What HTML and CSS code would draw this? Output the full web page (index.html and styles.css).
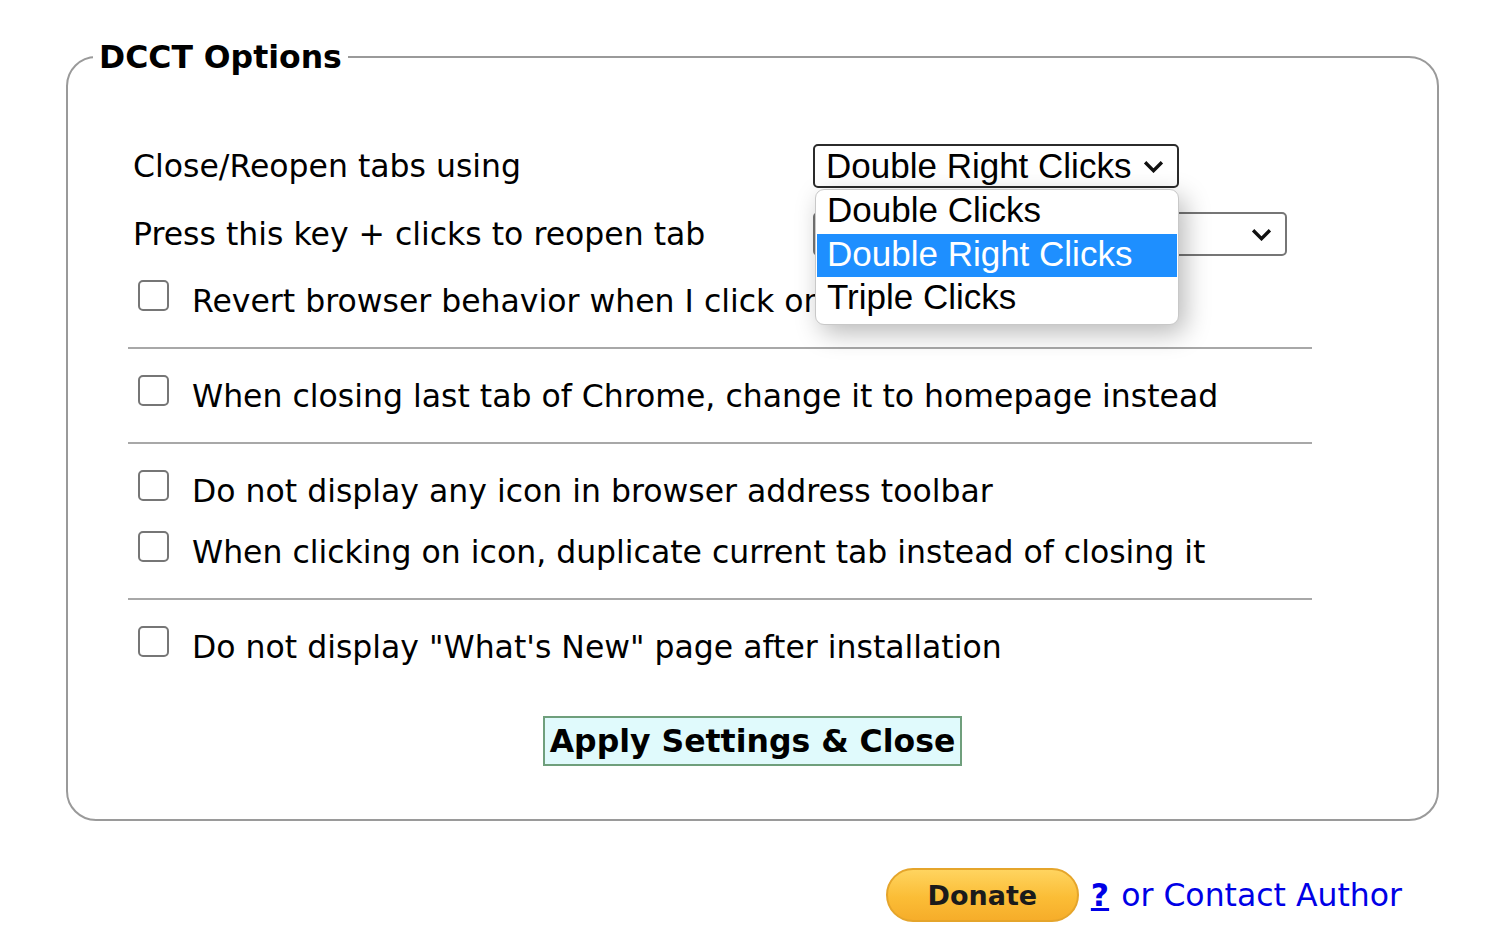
FILE: index.html
```html
<!DOCTYPE html>
<html lang="en">
<head>
  <meta charset="UTF-8">
  <title>DCCT Options</title>
  <link rel="stylesheet" href="styles.css">
</head>
<body>

<!-- Options box -->
<form class="options">
  <fieldset class="box">
    <legend>DCCT Options</legend>

    <!-- Select rows -->
    <div class="settings">
      <label class="setting-label">Close/Reopen tabs using</label>
      <div class="select-wrap">
        <div class="select select-mode is-open">
          <span>Double Right Clicks</span>
          <svg class="chevron" viewBox="0 0 20 12"><polyline points="2,2 10,10 18,2"/></svg>
        </div>
        <ul class="dropdown">
          <li>Double Clicks</li>
          <li class="active">Double Right Clicks</li>
          <li>Triple Clicks</li>
        </ul>
      </div>

      <label class="setting-label">Press this key + clicks to reopen tab</label>
      <div class="select-wrap">
        <div class="select select-key">
          <span>Ctrl</span>
          <svg class="chevron" viewBox="0 0 20 12"><polyline points="2,2 10,10 18,2"/></svg>
        </div>
      </div>
    </div>

    <label class="check-row first"><input type="checkbox"><span>Revert browser behavior when I click on a link</span></label>
    <hr>
    <label class="check-row"><input type="checkbox"><span>When closing last tab of Chrome, change it to homepage instead</span></label>
    <hr>
    <label class="check-row"><input type="checkbox"><span>Do not display any icon in browser address toolbar</span></label>
    <label class="check-row"><input type="checkbox"><span>When clicking on icon, duplicate current tab instead of closing it</span></label>
    <hr>
    <label class="check-row"><input type="checkbox"><span>Do not display "What's New" page after installation</span></label>

    <div class="actions">
      <button type="button" class="apply">Apply Settings &amp; Close</button>
    </div>
  </fieldset>
</form>

<!-- Footer -->
<div class="footer">
  <button type="button" class="donate">Donate</button>
  <a href="#" class="help">?</a>
  <a href="#" class="contact">or Contact Author</a>
</div>

</body>
</html>
```

FILE: styles.css
```css
/* General */
* {
  box-sizing: border-box;
}
body {
  margin: 0;
  background: #fff;
  color: #000;
  font-family: "DejaVu Sans", Verdana, sans-serif;
  font-size: 31.5px;
}

/* Options box */
.options {
  margin: 0;
  padding: 38px 0 0 66px;
}

.box {
  width: 1373px;
  margin: 0;
  padding: 56px 60px 53px 60px;
  border: 2px solid #9a9a9a;
  border-radius: 30px;
}

.box legend {
  margin-left: -35px;
  padding: 0 6px;
  font-weight: bold;
  line-height: 38px;
}

/* Select rows */
.settings {
  display: grid;
  grid-template-columns: 685px auto;
  grid-auto-rows: 68px;
  align-items: center;
}

.setting-label {
  padding-left: 5px;
}

.select-wrap {
  position: relative;
}

.select {
  display: flex;
  align-items: center;
  justify-content: space-between;
  height: 44px;
  padding: 0 13px 0 11px;
  border: 2px solid #767676;
  border-radius: 5px;
  background: #fff;
  font-family: "Liberation Sans", Arial, sans-serif;
  font-size: 35px;
  line-height: 40px;
}

.select-mode {
  width: 366px;
  border-color: #2b2b2b;
}

.select-key {
  width: 474px;
}

.chevron {
  width: 21px;
  height: 13px;
  fill: none;
  stroke: #111;
  stroke-width: 3.2;
}

/* Open dropdown list */
.dropdown {
  position: absolute;
  top: 45px;
  left: 2px;
  z-index: 10;
  width: 364px;
  margin: 0;
  padding: 0 1px 3px 1px;
  list-style: none;
  background: #fff;
  border: 1px solid #c8c8c8;
  border-radius: 9px;
  box-shadow: 6px 8px 26px rgba(0, 0, 0, 0.28);
  font-family: "Liberation Sans", Arial, sans-serif;
  font-size: 35px;
}

.dropdown li {
  height: 43.5px;
  line-height: 40px;
  padding-left: 10px;
}

.dropdown li.active {
  background: #1e8fff;
  color: #fff;
}

/* Checkbox rows */
.check-row {
  display: flex;
  align-items: center;
  height: 61px;
}

.check-row.first {
  margin-top: 2px;
}

.check-row input {
  appearance: none;
  -webkit-appearance: none;
  width: 31px;
  height: 31px;
  margin: 0 23px 10px 10px;
  border: 2px solid #767676;
  border-radius: 5px;
  background: #fff;
}

.box hr {
  width: 1184px;
  margin: 16px 0;
  border: 0;
  border-top: 2px solid #a8a8a8;
}

/* Apply button */
.actions {
  margin-top: 39px;
  text-align: center;
}

.apply {
  height: 50px;
  padding: 0 5px;
  border: 2px solid #6f9f7c;
  background: #e0fafc;
  color: #000;
  font-family: "DejaVu Sans", Verdana, sans-serif;
  font-size: 31.5px;
  font-weight: bold;
}

/* Footer */
.footer {
  display: flex;
  justify-content: flex-end;
  align-items: center;
  margin-top: 47px;
  padding-right: 98px;
}

.donate {
  width: 193px;
  height: 54px;
  margin-right: 12px;
  border: 2px solid #e5a52b;
  border-radius: 27px;
  background: linear-gradient(#ffd45f, #fbbd36 55%, #f6ad2a);
  color: #1b1b1b;
  font-family: "DejaVu Sans", Verdana, sans-serif;
  font-size: 27px;
  font-weight: bold;
}

.footer a {
  color: #0000e6;
}

.help {
  font-weight: bold;
  text-decoration: underline;
  margin-right: 12px;
}

.contact {
  text-decoration: none;
}
```
